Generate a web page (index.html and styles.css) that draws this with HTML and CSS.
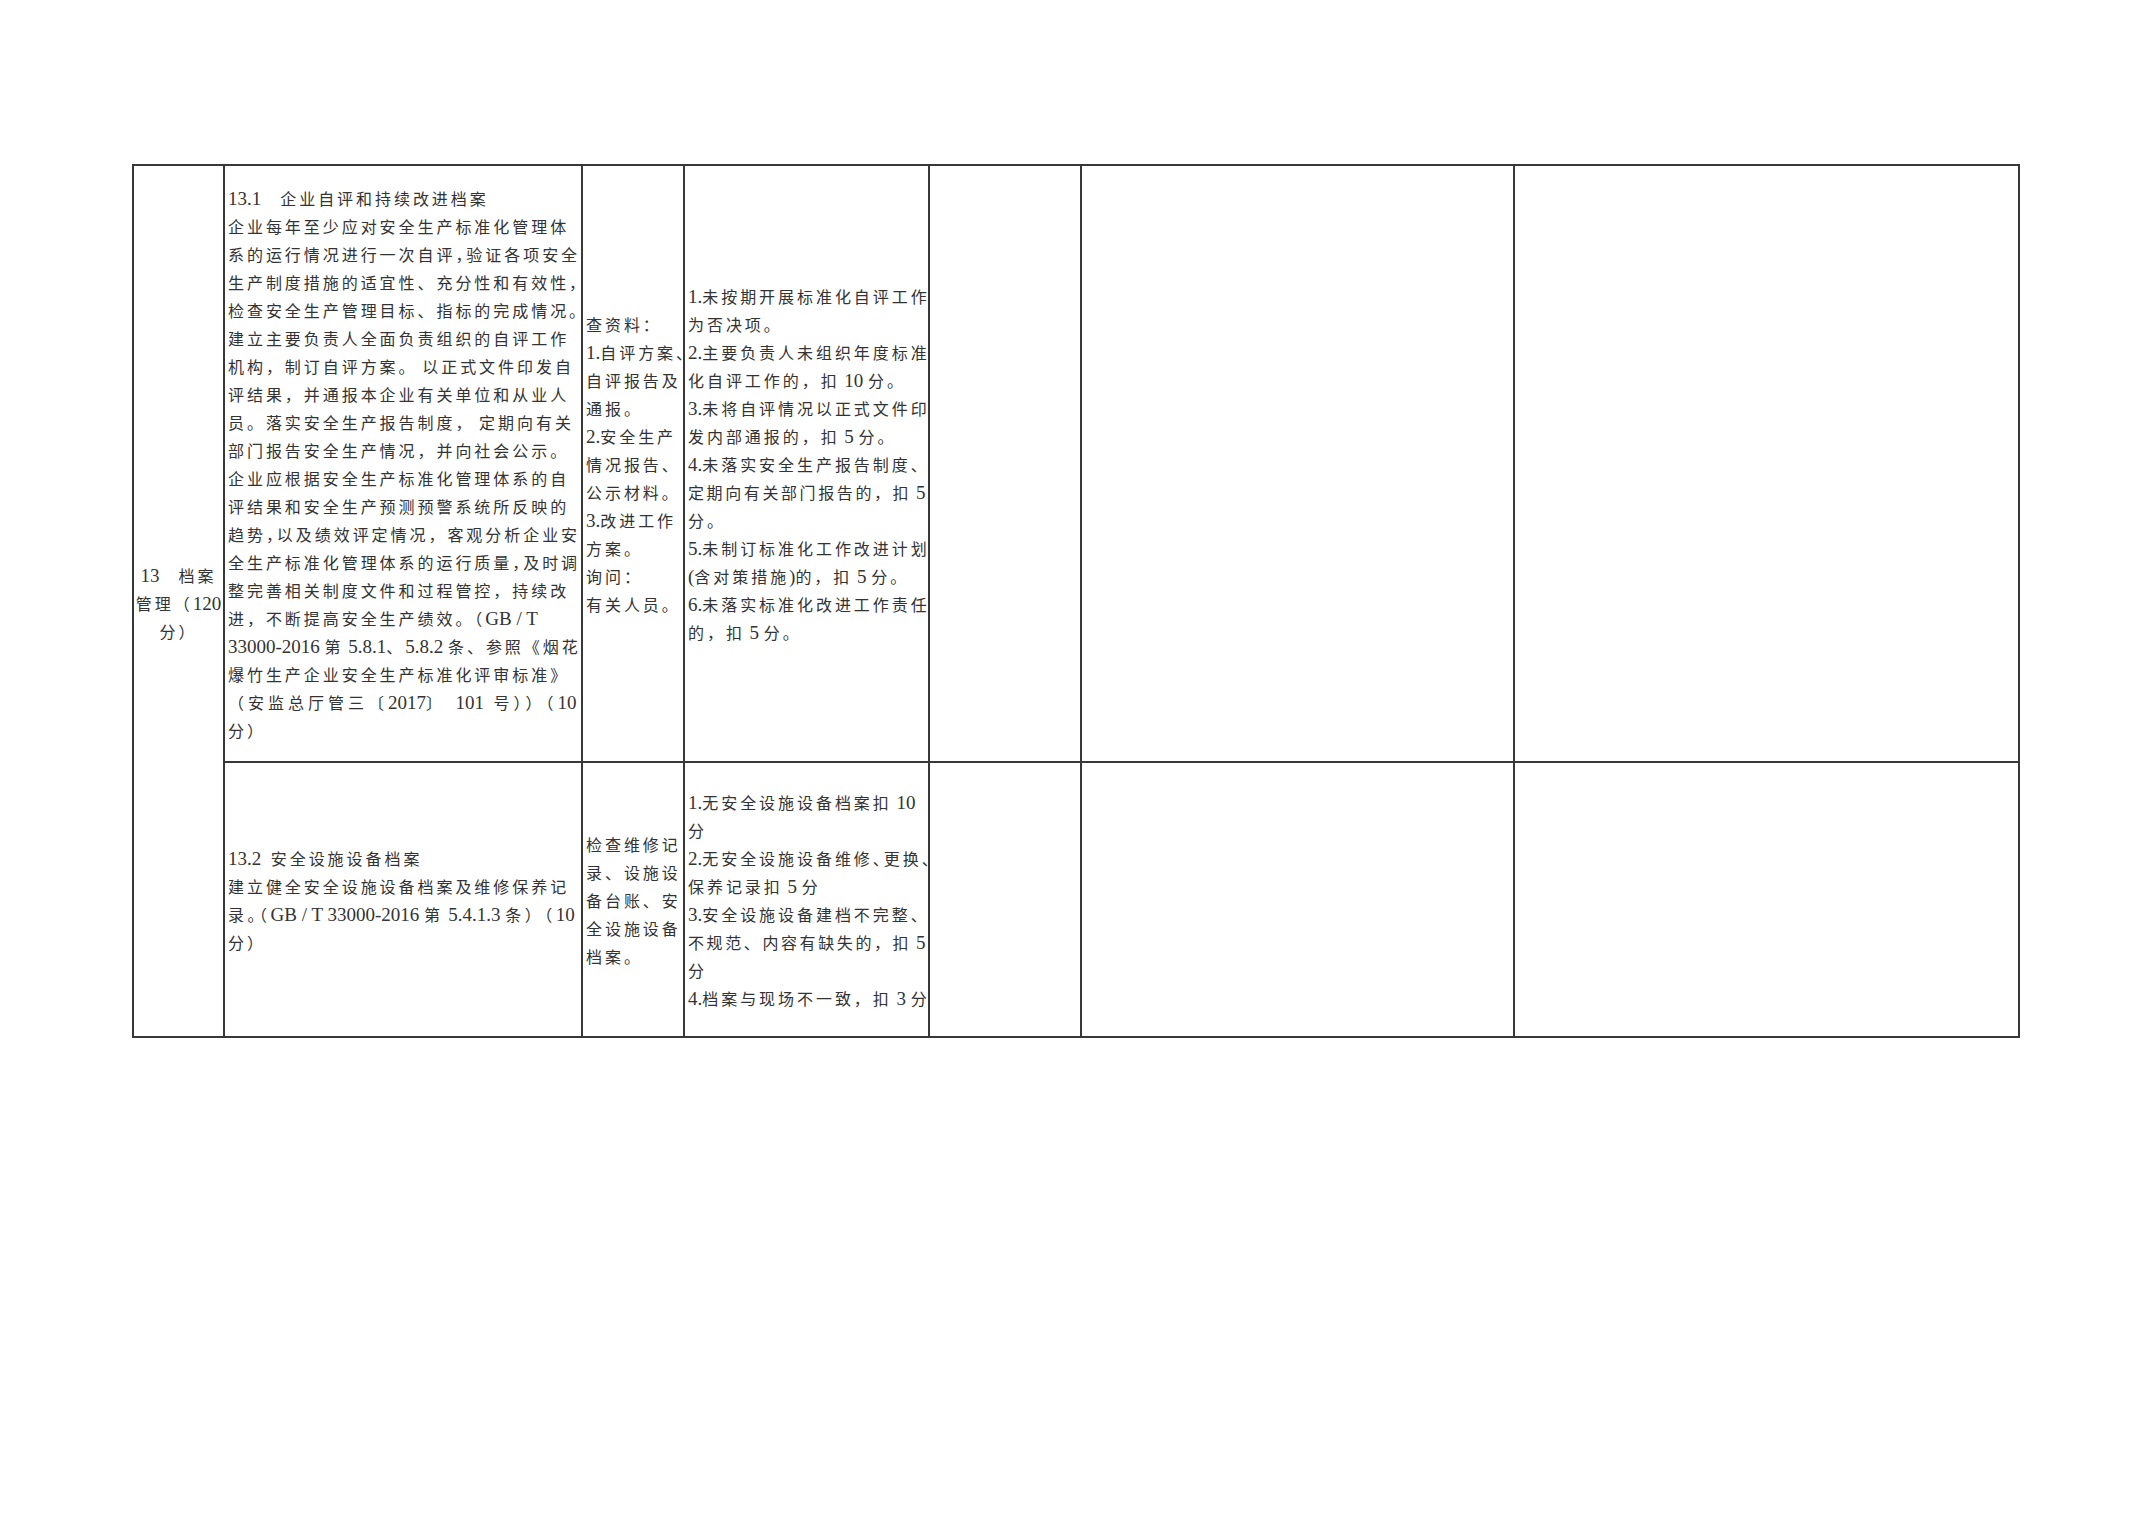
FILE: index.html
```html
<!DOCTYPE html>
<html lang="zh-CN">
<head>
<meta charset="utf-8">
<title>档案管理</title>
<link rel="stylesheet" href="styles.css">
</head>
<body>
<table class="sheet">
  <colgroup>
    <col class="w1"><col class="w2"><col class="w3"><col class="w4"><col class="w5"><col class="w6"><col class="w7">
  </colgroup>
  <tr class="r1">
    <td class="c1" rowspan="2">
      <div class="ln"><span class="r">13&nbsp;&nbsp;&nbsp;&nbsp;</span>档案</div>
      <div class="ln">管理（<span class="r">120</span></div>
      <div class="ln">分）</div>
    </td>
    <td>
      <div class="ln"><span class="r">13.1&nbsp;&nbsp;&nbsp;&nbsp;</span>企业自评和持续改进档案</div>
      <div class="ln">企业每年至少应对安全生产标准化管理体</div>
      <div class="ln">系的运行情况进行一次自评<span class="h">，</span>验证各项安全</div>
      <div class="ln">生产制度措施的适宜性、充分性和有效性，</div>
      <div class="ln">检查安全生产管理目标、指标的完成情况。</div>
      <div class="ln">建立主要负责人全面负责组织的自评工作</div>
      <div class="ln">机构，制订自评方案。<span class="r">&nbsp;</span>以正式文件印发自</div>
      <div class="ln">评结果，并通报本企业有关单位和从业人</div>
      <div class="ln">员。落实安全生产报告制度，<span class="r">&nbsp;</span>定期向有关</div>
      <div class="ln">部门报告安全生产情况，并向社会公示。</div>
      <div class="ln">企业应根据安全生产标准化管理体系的自</div>
      <div class="ln">评结果和安全生产预测预警系统所反映的</div>
      <div class="ln">趋势<span class="h">，</span>以及绩效评定情况，客观分析企业安</div>
      <div class="ln">全生产标准化管理体系的运行质量<span class="h">，</span>及时调</div>
      <div class="ln">整完善相关制度文件和过程管控，持续改</div>
      <div class="ln">进，不断提高安全生产绩效。（<span class="r">GB / T</span></div>
      <div class="ln"><span class="r">33000-2016 </span>第<span class="r"> 5.8.1</span>、<span class="r">5.8.2 </span>条、参照《烟花</div>
      <div class="ln">爆竹生产企业安全生产标准化评审标准》</div>
      <div class="ln wide1">（安监总厅管三〔<span class="r">2017</span>〕<span class="r">&nbsp; 101&nbsp; </span>号））（<span class="r">10</span></div>
      <div class="ln">分）</div>
    </td>
    <td>
      <div class="ln">查资料：</div>
      <div class="ln"><span class="r">1.</span>自评方案、</div>
      <div class="ln">自评报告及</div>
      <div class="ln">通报。</div>
      <div class="ln"><span class="r">2.</span>安全生产</div>
      <div class="ln">情况报告、</div>
      <div class="ln">公示材料。</div>
      <div class="ln"><span class="r">3.</span>改进工作</div>
      <div class="ln">方案。</div>
      <div class="ln">询问：</div>
      <div class="ln">有关人员。</div>
    </td>
    <td>
      <div class="ln"><span class="r">1.</span>未按期开展标准化自评工作</div>
      <div class="ln">为否决项。</div>
      <div class="ln"><span class="r">2.</span>主要负责人未组织年度标准</div>
      <div class="ln">化自评工作的，扣<span class="r"> 10 </span>分。</div>
      <div class="ln"><span class="r">3.</span>未将自评情况以正式文件印</div>
      <div class="ln">发内部通报的，扣<span class="r"> 5 </span>分。</div>
      <div class="ln"><span class="r">4.</span>未落实安全生产报告制度、</div>
      <div class="ln tight">定期向有关部门报告的，扣<span class="r"> 5</span></div>
      <div class="ln">分。</div>
      <div class="ln"><span class="r">5.</span>未制订标准化工作改进计划</div>
      <div class="ln"><span class="r">(</span>含对策措施<span class="r">)</span>的，扣<span class="r"> 5 </span>分。</div>
      <div class="ln"><span class="r">6.</span>未落实标准化改进工作责任</div>
      <div class="ln">的，扣<span class="r"> 5 </span>分。</div>
    </td>
    <td></td>
    <td></td>
    <td></td>
  </tr>
  <tr class="r2">
    <td>
      <div class="ln"><span class="r">13.2&nbsp;&nbsp;</span>安全设施设备档案</div>
      <div class="ln">建立健全安全设施设备档案及维修保养记</div>
      <div class="ln wide3">录<span class="h">。</span>（<span class="r">GB / T 33000-2016 </span>第<span class="r"> 5.4.1.3 </span>条）（<span class="r">10</span></div>
      <div class="ln">分）</div>
    </td>
    <td>
      <div class="ln">检查维修记</div>
      <div class="ln">录、设施设</div>
      <div class="ln">备台账、安</div>
      <div class="ln">全设施设备</div>
      <div class="ln">档案。</div>
    </td>
    <td>
      <div class="ln"><span class="r">1.</span>无安全设施设备档案扣<span class="r"> 10</span></div>
      <div class="ln">分</div>
      <div class="ln"><span class="r">2.</span>无安全设施设备维修<span class="h">、</span>更换<span class="h">、</span></div>
      <div class="ln">保养记录扣<span class="r"> 5 </span>分</div>
      <div class="ln"><span class="r">3.</span>安全设施设备建档不完整、</div>
      <div class="ln tight">不规范、内容有缺失的，扣<span class="r"> 5</span></div>
      <div class="ln">分</div>
      <div class="ln"><span class="r">4.</span>档案与现场不一致，扣<span class="r"> 3 </span>分</div>
    </td>
    <td></td>
    <td></td>
    <td></td>
  </tr>
</table>
</body>
</html>
```

FILE: styles.css
```css
html, body {
  margin: 0;
  padding: 0;
  background: #ffffff;
}

body {
  width: 2149px;
  height: 1520px;
  overflow: hidden;
  font-family: "Noto Sans CJK SC", "Liberation Serif", sans-serif;
  color: #333333;
}

.sheet {
  border-collapse: collapse;
  table-layout: fixed;
  width: 1888px;
  margin: 164px 0 0 132px;
}

.w1 { width: 91px; }
.w2 { width: 358px; }
.w3 { width: 102px; }
.w4 { width: 245px; }
.w5 { width: 152px; }
.w6 { width: 433px; }
.w7 { width: 505px; }

.r1 { height: 597px; }
.r2 { height: 275px; }

.sheet td {
  border: 2px solid #383838;
  padding: 0 2px 0 3px;
  vertical-align: middle;
  font-size: 16px;
  font-weight: 400;
  letter-spacing: 2.95px;
  overflow: visible;
}

.sheet td.c1 {
  padding: 4px 0 0 0;
  text-align: center;
}

.ln {
  height: 28px;
  line-height: 28px;
  white-space: nowrap;
}

.ln.wide1 {
  letter-spacing: 4px;
}

.ln.wide3 {
  letter-spacing: 3.5px;
}

.ln.tight {
  letter-spacing: 2.6px;
}

.r {
  font-family: "Liberation Serif", "Times New Roman", serif;
  font-size: 19px;
  font-weight: 400;
  letter-spacing: 0;
  line-height: 0;
}

.h {
  font-feature-settings: "halt";
}
```
